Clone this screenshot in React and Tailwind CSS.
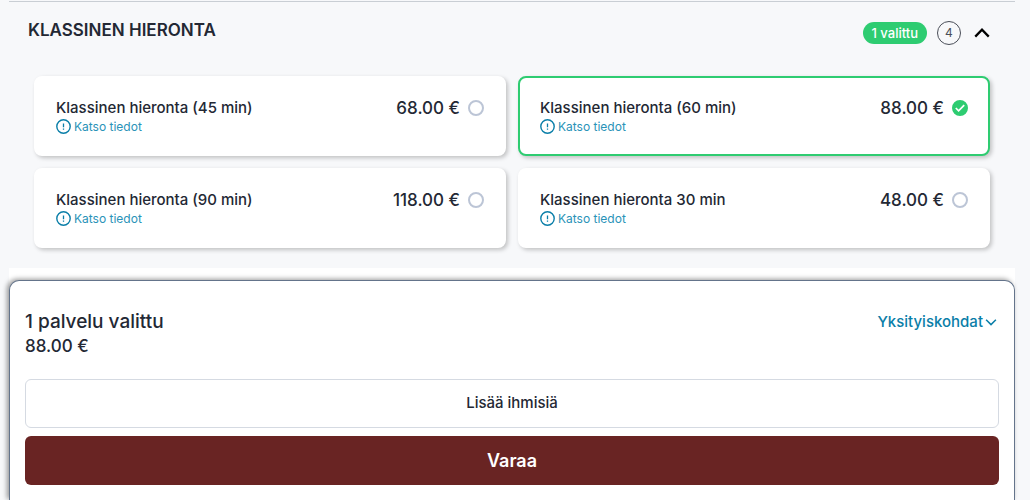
import { useState } from "react";

const services = [
  { id: "k45", name: "Klassinen hieronta (45 min)", price: "68.00 €" },
  { id: "k60", name: "Klassinen hieronta (60 min)", price: "88.00 €" },
  { id: "k90", name: "Klassinen hieronta (90 min)", price: "118.00 €" },
  { id: "k30", name: "Klassinen hieronta 30 min", price: "48.00 €" },
];

function InfoIcon() {
  return (
    <svg viewBox="0 0 16 16" className="size-4 shrink-0" fill="none" stroke="#0a7ea8" aria-hidden="true">
      <circle cx="7.5" cy="7.5" r="6.7" strokeWidth="1.4" />
      <path d="M7.5 4.4v3.8M7.5 9.4v1.3" strokeWidth="1.3" />
    </svg>
  );
}

function Chevron({ className, d, width }) {
  return (
    <svg viewBox="0 0 16 16" className={className} fill="none" stroke="currentColor" strokeWidth={width} aria-hidden="true">
      <path d={d} />
    </svg>
  );
}

function ServiceCard({ service, selected, onSelect }) {
  return (
    <div
      className={
        "flex h-20 items-start justify-between rounded-lg border-2 bg-white px-5 pt-5 shadow-[2px_2px_4px_rgba(0,0,0,0.22)] " +
        (selected ? "border-[#2ecc71]" : "border-white")
      }
    >
      <div>
        <label htmlFor={service.id} className="block text-[15px] leading-[19px] font-medium">
          {service.name}
        </label>
        <button type="button" className="flex items-center gap-[2px] text-[12px] leading-[19px] text-[#2a93b8]">
          <InfoIcon />
          Katso tiedot
        </button>
      </div>
      <div className="flex items-center gap-2">
        <span className="text-[17px] leading-5 font-medium">{service.price}</span>
        <span className="relative flex size-4">
          <input
            id={service.id}
            type="radio"
            name="service"
            checked={selected}
            onChange={onSelect}
            className="size-4 appearance-none rounded-full border-2 border-[#bcc5d6] bg-white checked:border-[#2ecc71] checked:bg-[#2ecc71]"
          />
          {selected && (
            <svg viewBox="0 0 16 16" className="pointer-events-none absolute inset-0 size-4" fill="none" stroke="#fff" strokeWidth="1.7" aria-hidden="true">
              <path d="M3.8 8l2.8 2.8L12.2 5.2" />
            </svg>
          )}
        </span>
      </div>
    </div>
  );
}

export default function App() {
  const [selectedId, setSelectedId] = useState("k60");
  const selected = services.find((s) => s.id === selectedId);

  return (
    <main className="flex min-h-screen flex-col bg-[#f7f8fa] pt-px pr-[15px] pl-[9px] font-['Inter','Liberation_Sans',sans-serif] text-[#232834]">
      <section className="border-t border-[#c9ced4] pb-5">
        <header className="flex justify-between pt-[19px] pr-6 pl-[19px]">
          <h2 className="text-[17px] leading-[19px] font-semibold">KLASSINEN HIERONTA</h2>
          <div className="flex items-center gap-[10px]">
            <span className="rounded-full bg-[#2ecc71] px-[9px] text-[13px] leading-[22px] font-medium text-white">1 valittu</span>
            <span className="flex size-6 items-center justify-center rounded-full border border-[#4a4e58] text-[12px] text-[#4a4e58]">4</span>
            <button type="button" aria-label="Sulje" className="ml-[2px] text-black">
              <Chevron className="block size-[18px]" d="M2 11.2L8 5l6 6.2" width="2" />
            </button>
          </div>
        </header>
        <div className="grid grid-cols-2 gap-3 pt-[31px] pr-[25px] pl-[25px]">
          {services.map((s) => (
            <ServiceCard key={s.id} service={s} selected={s.id === selectedId} onSelect={() => setSelectedId(s.id)} />
          ))}
        </div>
      </section>
      <div className="flex flex-1 flex-col bg-white pt-3">
        <section className="flex-1 rounded-t-[10px] border border-b-0 border-[#64748b] bg-white px-[15px] pt-7 pb-[15px] shadow-[-2px_-1px_5px_rgba(0,0,0,0.4)]">
          <div className="flex items-start justify-between">
            <div>
              <p className="text-[19px] leading-[25px] font-medium">1 palvelu valittu</p>
              <p className="text-[17px] leading-[25px] font-medium">{selected.price}</p>
            </div>
            <button type="button" className="flex items-center gap-[2px] pr-[2px] text-[15px] leading-[26px] font-medium text-[#0a7ea8]">
              Yksityiskohdat
              <Chevron className="size-3" d="M1.5 5L8 11.5 14.5 5" width="2" />
            </button>
          </div>
          <div className="mt-5 flex flex-col gap-2">
            <button type="button" className="h-[49px] rounded-md border border-[#d5dae2] bg-white text-[15px] font-medium">
              Lisää ihmisiä
            </button>
            <button type="button" className="h-[49px] rounded-md bg-[#692423] text-[18px] font-semibold text-white">
              Varaa
            </button>
          </div>
        </section>
      </div>
    </main>
  );
}
